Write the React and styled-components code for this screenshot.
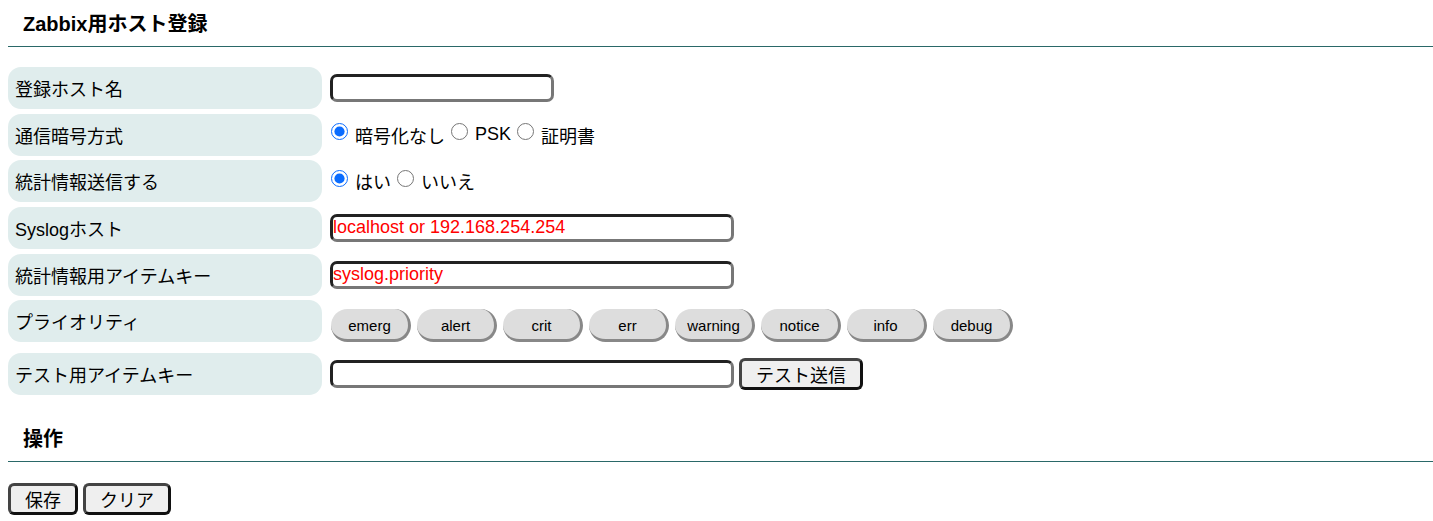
import React, { useState } from 'react';
import styled, { createGlobalStyle } from 'styled-components';

const GlobalStyle = createGlobalStyle`
  body {
    margin: 8px 0 8px 8px;
    background: #ffffff;
    font-family: 'Liberation Sans', Arial, 'Noto Sans CJK JP', sans-serif;
    color: #000000;
  }
`

const SectionTitle = styled.h2`
   margin: 0;
   height: 39px;
   padding: 5px 0 0 15px;
   box-sizing: border-box;
   border-bottom: 1px solid #2a6868;
   font-size: 20px;
   font-weight: 700;
   line-height: 22px;

   &.ops {
    margin-top: 28px;
   }
`

const Form = styled.div`
   margin-top: 20px;
   display: flex;
   flex-direction: column;
   gap: 4.67px;
`

const Row = styled.div`
   display: grid;
   grid-template-columns: 314px 1fr;
   column-gap: 8px;
   align-items: center;

   &.spaced {
    margin-bottom: 6px;
   }
`

const Label = styled.div`
   height: 42px;
   padding-left: 7px;
   border-radius: 13px;
   background: #e0eded;
   font-size: 18px;
   display: flex;
   align-items: center;
`

const Field = styled.div`
   display: flex;
   align-items: center;
   gap: ${p => p.$gap ?? 5}px;
   font-size: 18px;
`

const TextInput = styled.input`
   box-sizing: border-box;
   width: ${p => p.$w}px;
   height: 28px;
   padding: 0;
   border-style: solid;
   border-width: 3px;
   border-color: #222 #777 #777 #222;
   border-radius: 7px;
   font-family: inherit;
   font-size: 18px;
   color: #ff0000;
   background: #fff;
   outline: none;
`

const RadioLabel = styled.label`
   display: inline-flex;
   align-items: center;
   margin-right: 5px;
`

const Radio = styled.input`
   width: 17px;
   height: 17px;
   margin: 0 7px 0 1px;
   accent-color: #0a6cff;
   position: relative;
   top: -3px;
`

const PriorityButtons = styled.div`
   display: flex;
   gap: 6px;
   padding-top: 8px;
   margin-left: 1px;
`

const PillButton = styled.button`
   width: 80px;
   height: 33px;
   border-style: solid;
   border-width: 0 3px 3px 0;
   border-color: #888;
   border-radius: 17px;
   background: #dddddd;
   font-family: inherit;
   font-size: 15px;
   color: #000;
   padding: 3px 0 0;
   cursor: pointer;
`

const PlainButton = styled.button`
   height: ${p => p.$h || 32}px;
   padding: 0 15px;
   box-sizing: border-box;
   border-style: solid;
   border-width: 3px;
   border-color: #444 #111 #111 #444;
   border-radius: 6px;
   background: #efefef;
   font-family: inherit;
   font-size: 18px;
   color: #000;
   cursor: pointer;

   &.narrow {
    padding: 0 14px;
   }
`

const Actions = styled.div`
   margin-top: 21px;
   display: flex;
   gap: 5px;
`

const priorities = ['emerg', 'alert', 'crit', 'err', 'warning', 'notice', 'info', 'debug'];

export default function App() {
    const [enc, setEnc] = useState('none');
    const [stats, setStats] = useState('yes');

    return (
        <>
            <GlobalStyle />
            <SectionTitle>Zabbix用ホスト登録</SectionTitle>
            <Form>
                <Row>
                    <Label>登録ホスト名</Label>
                    <Field><TextInput $w={224} /></Field>
                </Row>
                <Row>
                    <Label>通信暗号方式</Label>
                    <Field $gap={0}>
                        <RadioLabel><Radio type="radio" checked={enc === 'none'} onChange={() => setEnc('none')} />暗号化なし</RadioLabel>
                        <RadioLabel><Radio type="radio" checked={enc === 'psk'} onChange={() => setEnc('psk')} />PSK</RadioLabel>
                        <RadioLabel><Radio type="radio" checked={enc === 'cert'} onChange={() => setEnc('cert')} />証明書</RadioLabel>
                    </Field>
                </Row>
                <Row>
                    <Label>統計情報送信する</Label>
                    <Field $gap={0}>
                        <RadioLabel><Radio type="radio" checked={stats === 'yes'} onChange={() => setStats('yes')} />はい</RadioLabel>
                        <RadioLabel><Radio type="radio" checked={stats === 'no'} onChange={() => setStats('no')} />いいえ</RadioLabel>
                    </Field>
                </Row>
                <Row>
                    <Label>Syslogホスト</Label>
                    <Field><TextInput $w={404} defaultValue="localhost or 192.168.254.254" /></Field>
                </Row>
                <Row>
                    <Label>統計情報用アイテムキー</Label>
                    <Field><TextInput $w={404} defaultValue="syslog.priority" /></Field>
                </Row>
                <Row className="spaced">
                    <Label>プライオリティ</Label>
                    <PriorityButtons>
                        {priorities.map(p => <PillButton key={p}>{p}</PillButton>)}
                    </PriorityButtons>
                </Row>
                <Row>
                    <Label>テスト用アイテムキー</Label>
                    <Field>
                        <TextInput $w={404} />
                        <PlainButton className="narrow" $h={32}>テスト送信</PlainButton>
                    </Field>
                </Row>
            </Form>
            <SectionTitle className="ops">操作</SectionTitle>
            <Actions>
                <PlainButton className="narrow">保存</PlainButton>
                <PlainButton className="narrow">クリア</PlainButton>
            </Actions>
        </>
    )
}
